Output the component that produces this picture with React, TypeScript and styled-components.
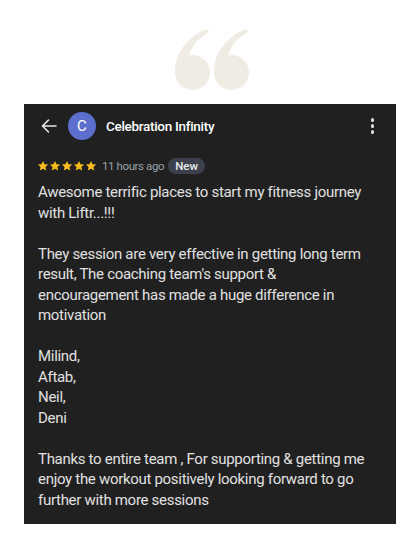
import React from 'react'
import styled, { createGlobalStyle } from 'styled-components'

const GlobalStyle = createGlobalStyle`
  html, body {
    margin: 0;
    padding: 0;
    background: #ffffff;
  }
  body {
    font-family: Roboto, "Noto Sans", Arial, sans-serif;
  }
`

const Page = styled.div`
  width: 420px;
  height: 560px;
  display: flex;
  flex-direction: column;
  align-items: flex-start;
  box-sizing: border-box;
`

const QuoteArea = styled.div`
  width: 100%;
  height: 104px;
  display: flex;
  justify-content: center;
  align-items: flex-start;
  padding-top: 28px;
  padding-left: 8px;
  box-sizing: border-box;
`

const Card = styled.div`
  margin-left: 24px;
  width: 372px;
  height: 420px;
  background: #202020;
  box-sizing: border-box;
  display: flex;
  flex-direction: column;
`

const Header = styled.div`
  height: 44px;
  display: flex;
  align-items: center;
  padding: 0 16px 0 17px;
`

const Back = styled.div`
  width: 16px;
  height: 16px;
  display: flex;
  margin-right: 11px;
  svg {
    display: block;
  }
`

const Avatar = styled.div`
  width: 28px;
  height: 28px;
  border-radius: 50%;
  background: #5c6fce;
  color: #ffffff;
  display: flex;
  align-items: center;
  justify-content: center;
  font-size: 15px;
  margin-right: 10px;
`

const Name = styled.div`
  flex: 1;
  color: #ffffff;
  font-size: 13.5px;
  letter-spacing: -0.3px;
  font-weight: 500;
`

const Kebab = styled.div`
  display: flex;
  flex-direction: column;
  gap: 2.5px;
  margin-right: 6px;
  span {
    width: 3.5px;
    height: 3.5px;
    border-radius: 50%;
    background: #dcdcdc;
  }
`

const Body = styled.div`
  padding: 0 24px 0 14px;
`

const Meta = styled.div`
  display: flex;
  align-items: center;
  height: 20px;
  margin-top: 8px;
`

const Stars = styled.div`
  display: flex;
  margin-left: -1px;
  margin-right: 5px;
  svg {
    display: block;
  }
`

const Time = styled.span`
  color: #9aa0a6;
  font-size: 11.5px;
  letter-spacing: -0.4px;
  margin-right: 4px;
`

const Badge = styled.span`
  background: #3b404c;
  color: #e8eaed;
  font-size: 11.5px;
  font-weight: 500;
  padding: 1px 7px;
  border-radius: 9px;
  line-height: 14px;
`

const Text = styled.div`
  margin-top: 6px;
  color: #e0e0e0;
  font-size: 15px;
  letter-spacing: -0.3px;
  line-height: 20.5px;
  white-space: pre-line;
`

const Quote: React.FC = () => (
  <svg width="80" height="62" viewBox="0 0 80 62" fill="#f1ece3">
    <path d="M1 44 C1 25 13 9 33 1 L35 4 C23 11 17 19 15.5 27.5 C16.5 27.2 17.8 27 19 27 A17.5 17.5 0 1 1 1 44 Z" />
    <path d="M40 44 C40 25 52 9 72 1 L74 4 C62 11 56 19 54.5 27.5 C55.5 27.2 56.8 27 58 27 A17.5 17.5 0 1 1 40 44 Z" />
  </svg>
)

const Star: React.FC = () => (
  <svg width="12" height="12" viewBox="0 0 24 24">
    <path
      fill="#f6bb1e"
      d="M12 1.8l3.1 6.6 7.2.8-5.4 4.9 1.5 7.1L12 17.6l-6.4 3.6 1.5-7.1L1.7 9.2l7.2-.8z"
    />
  </svg>
)

const review = `Awesome terrific places to start my fitness journey with Liftr...!!!

They session are very effective in getting long term result, The coaching team's support & encouragement has made a huge difference in motivation

Milind,
Aftab,
Neil,
Deni

Thanks to entire team , For supporting & getting me enjoy the workout positively looking forward to go further with more sessions`

const App: React.FC = () => (
  <>
    <GlobalStyle />
    <Page>
      <QuoteArea>
        <Quote />
      </QuoteArea>
      <Card>
        <Header>
          <Back>
            <svg width="16" height="16" viewBox="0 0 16 16" fill="none" stroke="#e8e8e8" strokeWidth="1.6" strokeLinecap="round" strokeLinejoin="round">
              <path d="M15 8H1.5M7.5 2L1.5 8l6 6" />
            </svg>
          </Back>
          <Avatar>C</Avatar>
          <Name>Celebration Infinity</Name>
          <Kebab>
            <span />
            <span />
            <span />
          </Kebab>
        </Header>
        <Body>
          <Meta>
            <Stars>
              {[0, 1, 2, 3, 4].map(i => (
                <Star key={i} />
              ))}
            </Stars>
            <Time>11 hours ago</Time>
            <Badge>New</Badge>
          </Meta>
          <Text>{review}</Text>
        </Body>
      </Card>
    </Page>
  </>
)

export default App
